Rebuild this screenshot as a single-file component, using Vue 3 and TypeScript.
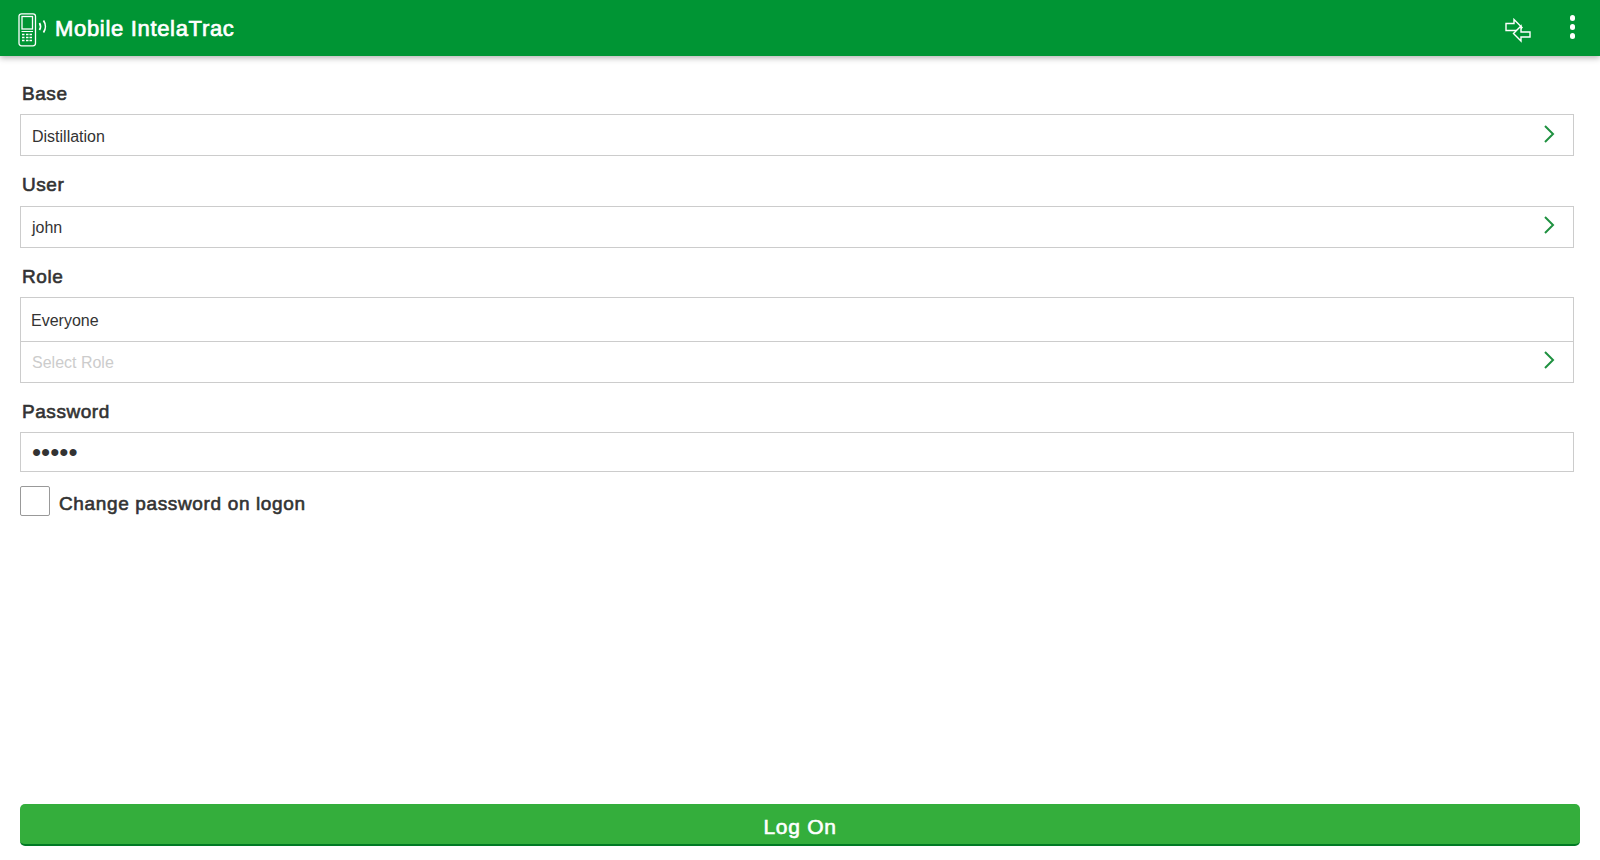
<script setup lang="ts">
import { ref } from "vue";

const base = ref("Distillation");
const user = ref("john");
const role = ref("Everyone");
const cambiarClave = ref(false);
</script>

<template>
  <div class="page">
    <header class="topbar">
      <div class="brand">
        <svg class="logo" width="32" height="34" viewBox="0 0 32 34" fill="none" stroke="#fff">
          <rect x="1" y="0.8" width="16.5" height="32" rx="2.5" stroke-width="1.3" />
          <rect x="4" y="3.5" width="10.5" height="12.5" stroke-width="1.3" />
          <path d="M3.5 18.5h11.5" stroke-width="1" />
          <path d="M4 21.5h2.5M8 21.5h2.5M11.5 21.5h2.5M4 24.5h2.5M8 24.5h2.5M11.5 24.5h2.5M4 27.5h2.5M8 27.5h2.5M11.5 27.5h2.5" stroke-width="1.6" />
          <path d="M21.5 10c1.2 2 1.2 5 0 7M25.5 7.5c2.4 3.5 2.4 8.5 0 12" stroke-width="1.7" />
        </svg>
        <span class="title">Mobile IntelaTrac</span>
      </div>
      <div class="actions">
        <svg class="swap" width="26" height="26" viewBox="0 0 26 26" fill="none" stroke="#fff" stroke-width="1.4">
          <path d="M1 5.5H9V1.5L17 9.5 14 12.5H1z" />
          <path d="M25 14H16V8L8.5 15.5 16 23V19H25z" fill="#009534" />
        </svg>
        <div class="dots"><i></i><i></i><i></i></div>
      </div>
    </header>

    <form class="form" @submit.prevent>
      <label class="label first">Base</label>
      <div class="box row">
        <span class="value">{{ base }}</span>
        <svg class="chev" width="12" height="18" viewBox="0 0 12 18" fill="none"><path d="M2 1l8 8-8 8" /></svg>
      </div>

      <label class="label user">User</label>
      <div class="box row">
        <span class="value">{{ user }}</span>
        <svg class="chev" width="12" height="18" viewBox="0 0 12 18" fill="none"><path d="M2 1l8 8-8 8" /></svg>
      </div>

      <label class="label">Role</label>
      <div class="box role">
        <div class="chip">{{ role }}</div>
        <div class="row select">
          <span class="value hint">Select Role</span>
          <svg class="chev" width="12" height="18" viewBox="0 0 12 18" fill="none"><path d="M2 1l8 8-8 8" /></svg>
        </div>
      </div>

      <label class="label">Password</label>
      <input class="box password" type="password" value="12345" />

      <label class="check">
        <input v-model="cambiarClave" type="checkbox" />
        <span>Change password on logon</span>
      </label>
    </form>

    <button class="logon" type="button">Log On</button>
  </div>
</template>

<style>
html,
body {
  margin: 0;
  background: #fff;
}
</style>

<style scoped>
.page {
  display: flex;
  flex-direction: column;
  height: 860px;
  font-family: "Liberation Sans", Arial, sans-serif;
  color: #333;
  overflow: hidden;
}

.topbar {
  display: flex;
  align-items: center;
  justify-content: space-between;
  height: 56px;
  flex-shrink: 0;
  background: #009534;
  box-shadow: 0 2px 6px rgba(0, 0, 0, 0.3);
  color: #fff;
}

.brand {
  display: flex;
  align-items: center;
  gap: 5px;
  padding-left: 18px;
}

.logo {
  display: block;
  margin-top: 3px;
}

.title {
  padding-top: 2px;
  font-size: 22px;
  letter-spacing: 0.68px;
  -webkit-text-stroke: 0.7px #fff;
}

.actions {
  display: flex;
  align-items: center;
  gap: 39px;
  padding-right: 25px;
}

.swap {
  display: block;
  margin-top: 6px;
}

.dots {
  display: flex;
  flex-direction: column;
  gap: 3.5px;
  margin-top: -2px;
}

.dots i {
  width: 5.5px;
  height: 5.5px;
  border-radius: 50%;
  background: #fff;
}

.form {
  flex: 1;
  display: flex;
  flex-direction: column;
  padding: 0 26px 0 20px;
}

.label {
  display: block;
  height: 26px;
  margin: 15px 0 8px 2px;
  font-size: 19px;
  letter-spacing: 0.55px;
  line-height: 28px;
  color: #333;
  -webkit-text-stroke: 0.6px #333;
}

.first {
  margin-top: 24px;
}

.user {
  margin-top: 16px;
  line-height: 25px;
}

.box {
  box-sizing: border-box;
  border: 1px solid #ccc;
  background: #fff;
}

.row {
  display: flex;
  align-items: center;
  justify-content: space-between;
  height: 42px;
  padding: 0 18px 0 11px;
}

.value {
  font-size: 16px;
  line-height: 42px;
  padding-top: 1px;
}

.first + .row .value {
  padding-top: 3px;
}

.hint {
  color: #ccc;
}

.chev {
  display: block;
  margin-top: -4px;
}

.first + .row .chev {
  margin-top: -2px;
}

.chev path {
  stroke: #1f9140;
  stroke-width: 2;
}

.role .select {
  height: 41px;
  border-top: 1px solid #ccc;
  box-sizing: border-box;
}

.chip {
  height: 43px;
  padding-left: 10px;
  font-size: 16px;
  line-height: 45px;
}

.password {
  display: block;
  width: 100%;
  height: 40px;
  padding: 0 11px;
  outline: none;
  font-size: 26px;
  color: #333;
  font-family: "Liberation Sans", Arial, sans-serif;
}

.check {
  display: flex;
  align-items: center;
  gap: 9px;
  margin-top: 14px;
  font-size: 19px;
  letter-spacing: 0.64px;
  color: #333;
  -webkit-text-stroke: 0.6px #333;
}

.check span {
  padding-top: 6px;
}

.check input {
  appearance: none;
  width: 30px;
  height: 30px;
  margin: 0;
  border: 1px solid #999;
  border-radius: 2px;
  background: #fff;
}

.logon {
  flex-shrink: 0;
  height: 42px;
  margin: 0 20px 14px;
  padding-top: 7px;
  border: 0;
  border-bottom: 2px solid #007a24;
  border-radius: 5px;
  background: #34ae3c;
  color: #fff;
  font-family: "Liberation Sans", Arial, sans-serif;
  font-size: 21px;
  letter-spacing: 0.7px;
  -webkit-text-stroke: 0.6px #fff;
}
</style>
